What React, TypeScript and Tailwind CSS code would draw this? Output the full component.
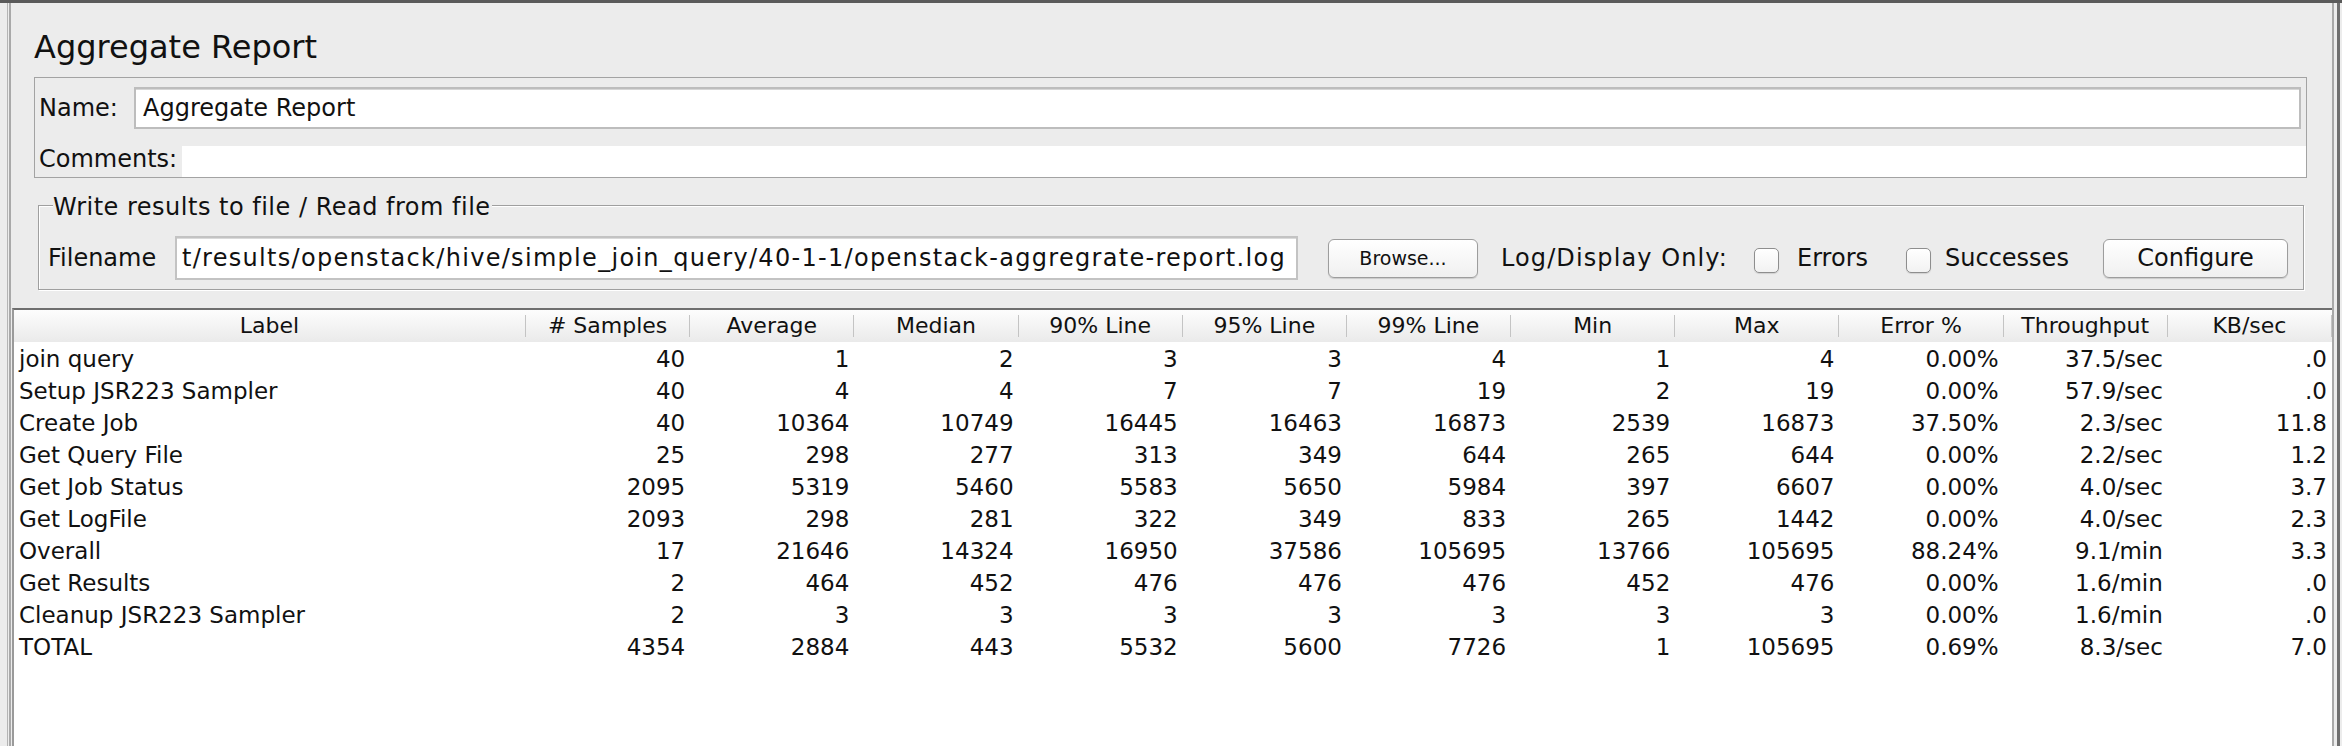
import React from 'react'

// ---------------------------------------------------------------------------
// Table data
// ---------------------------------------------------------------------------
const COLUMNS = [
  'Label', '# Samples', 'Average', 'Median', '90% Line', '95% Line', '99% Line',
  'Min', 'Max', 'Error %', 'Throughput', 'KB/sec',
]

const ROWS: string[][] = [
  ['join query', '40', '1', '2', '3', '3', '4', '1', '4', '0.00%', '37.5/sec', '.0'],
  ['Setup JSR223 Sampler', '40', '4', '4', '7', '7', '19', '2', '19', '0.00%', '57.9/sec', '.0'],
  ['Create Job', '40', '10364', '10749', '16445', '16463', '16873', '2539', '16873', '37.50%', '2.3/sec', '11.8'],
  ['Get Query File', '25', '298', '277', '313', '349', '644', '265', '644', '0.00%', '2.2/sec', '1.2'],
  ['Get Job Status', '2095', '5319', '5460', '5583', '5650', '5984', '397', '6607', '0.00%', '4.0/sec', '3.7'],
  ['Get LogFile', '2093', '298', '281', '322', '349', '833', '265', '1442', '0.00%', '4.0/sec', '2.3'],
  ['Overall', '17', '21646', '14324', '16950', '37586', '105695', '13766', '105695', '88.24%', '9.1/min', '3.3'],
  ['Get Results', '2', '464', '452', '476', '476', '476', '452', '476', '0.00%', '1.6/min', '.0'],
  ['Cleanup JSR223 Sampler', '2', '3', '3', '3', '3', '3', '3', '3', '0.00%', '1.6/min', '.0'],
  ['TOTAL', '4354', '2884', '443', '5532', '5600', '7726', '1', '105695', '0.69%', '8.3/sec', '7.0'],
]

// ---------------------------------------------------------------------------
// Small Aqua-ish widgets
// ---------------------------------------------------------------------------
const AquaButton = ({ label, className }: { label: string; className: string }) => (
  <button
    type="button"
    className={`flex items-center justify-center rounded-[6px] border border-[#9d9d9d] bg-gradient-to-b from-white to-[#f0f0f0] shadow-[0_1px_1px_rgba(0,0,0,0.15)] ${className}`}
  >
    {label}
  </button>
)

const Checkbox = () => (
  <span className="block h-[25px] w-[25px] rounded-[5px] border border-[#8e8e8e] bg-gradient-to-b from-white to-[#f2f2f2] shadow-[0_1px_1px_rgba(0,0,0,0.12)]" />
)

// ---------------------------------------------------------------------------
// App
// ---------------------------------------------------------------------------
export default function App() {
  return (
    <div className="flex h-[746px] w-[2342px] overflow-hidden border-t-[3px] border-[#5a5a5a] bg-[#ececec] font-['DejaVu_Sans',sans-serif] text-[24px] leading-[28px] text-[#111]">
      <div className="w-[7px] shrink-0" />
      <div className="w-px shrink-0 bg-[#b4b4b4]" />
      <div className="w-px shrink-0" />

      {/* Main panel */}
      <div className="flex min-w-0 flex-1 flex-col border-x-2 border-[#a9a9a9]">
        {/* Title */}
        <div className="mt-[25px] pl-[23px] text-[32px] leading-[38px]">Aggregate Report</div>

        {/* Name / comments */}
        <div className="ml-[23px] mr-[25px] mt-[11px] flex h-[101px] flex-col border border-[#a3a3a3]">
          <div className="flex h-[58px] items-center pl-[4px] pr-[5px] pt-[2px]">
            <span className="w-[95px] shrink-0">Name:</span>
            <div className="flex h-[42px] flex-1 items-center border-2 border-[#bdbdbd] bg-white pl-[7px] shadow-[inset_0_1px_0_#d6d6d6]">
              Aggregate Report
            </div>
          </div>
          <div className="flex flex-1 items-end pl-[4px]">
            <span className="w-[143px] shrink-0 pb-[4px]">Comments:</span>
            <div className="h-[31px] flex-1 bg-white" />
          </div>
        </div>

        {/* Write results to file */}
        <div className="relative ml-[27px] mr-[28px] mt-[27px] flex h-[85px] items-end border border-[#9f9f9f] pb-[9px] pl-[9px] shadow-[inset_1px_1px_0_#ffffff,1px_1px_0_#ffffff]">
          <span className="absolute left-[14px] top-[-13px] bg-[#ececec] pr-[1px] tracking-[0.5px]">
            Write results to file / Read from file
          </span>
          <div className="flex h-[44px] w-full items-center">
            <span className="w-[127px] shrink-0">Filename</span>
            <div className="flex h-[44px] w-[1123px] shrink-0 items-center overflow-hidden whitespace-nowrap border-2 border-[#c3c3c3] bg-white pl-[5px] tracking-[1.3px] shadow-[inset_0_1px_0_#dadada]">
              t/results/openstack/hive/simple_join_query/40-1-1/openstack-aggregrate-report.log
            </div>
            <AquaButton label="Browse..." className="ml-[30px] h-[39px] w-[150px] shrink-0 text-[19px]" />
            <span className="ml-[23px] w-[228px] shrink-0 whitespace-nowrap tracking-[1.1px]">Log/Display Only:</span>
            <span className="ml-[25px] mt-[4px]"><Checkbox /></span>
            <span className="ml-[18px] w-[72px] shrink-0">Errors</span>
            <span className="ml-[37px] mt-[4px]"><Checkbox /></span>
            <span className="ml-[14px] w-[124px] shrink-0">Successes</span>
            <AquaButton label="Configure" className="ml-[34px] h-[39px] w-[185px] shrink-0" />
          </div>
        </div>

        {/* Results table */}
        <div className="ml-[1px] mt-[18px] flex-1 border-t-2 border-l-2 border-[#6e6e6e] border-l-[#9a9a9a] bg-white text-[23px]">
          <div className="grid h-[32px] grid-cols-[512px_repeat(11,minmax(0,1fr))] bg-gradient-to-b from-[#fdfdfd] to-[#eaeaea] text-[22px]">
            {COLUMNS.map((col) => (
              <div key={col} className="flex h-full items-center">
                <span className="flex-1 text-center">{col}</span>
                <span className="h-[22px] w-px bg-[#c4c4c4]" />
              </div>
            ))}
          </div>
          {ROWS.map((row) => (
            <div key={row[0]} className="grid h-[32px] grid-cols-[512px_repeat(11,minmax(0,1fr))] items-center pt-[2px]">
              {row.map((cell, i) => (
                <span
                  key={i}
                  className={i === 0 ? 'pl-[5px] whitespace-nowrap' : 'pr-[5px] text-right whitespace-nowrap'}
                >
                  {cell}
                </span>
              ))}
            </div>
          ))}
        </div>
      </div>

      {/* Right window edge */}
      <div className="w-[3px] shrink-0" />
      <div className="w-[3px] shrink-0 bg-[#6f6f6f]" />
      <div className="w-[2px] shrink-0" />
    </div>
  )
}
